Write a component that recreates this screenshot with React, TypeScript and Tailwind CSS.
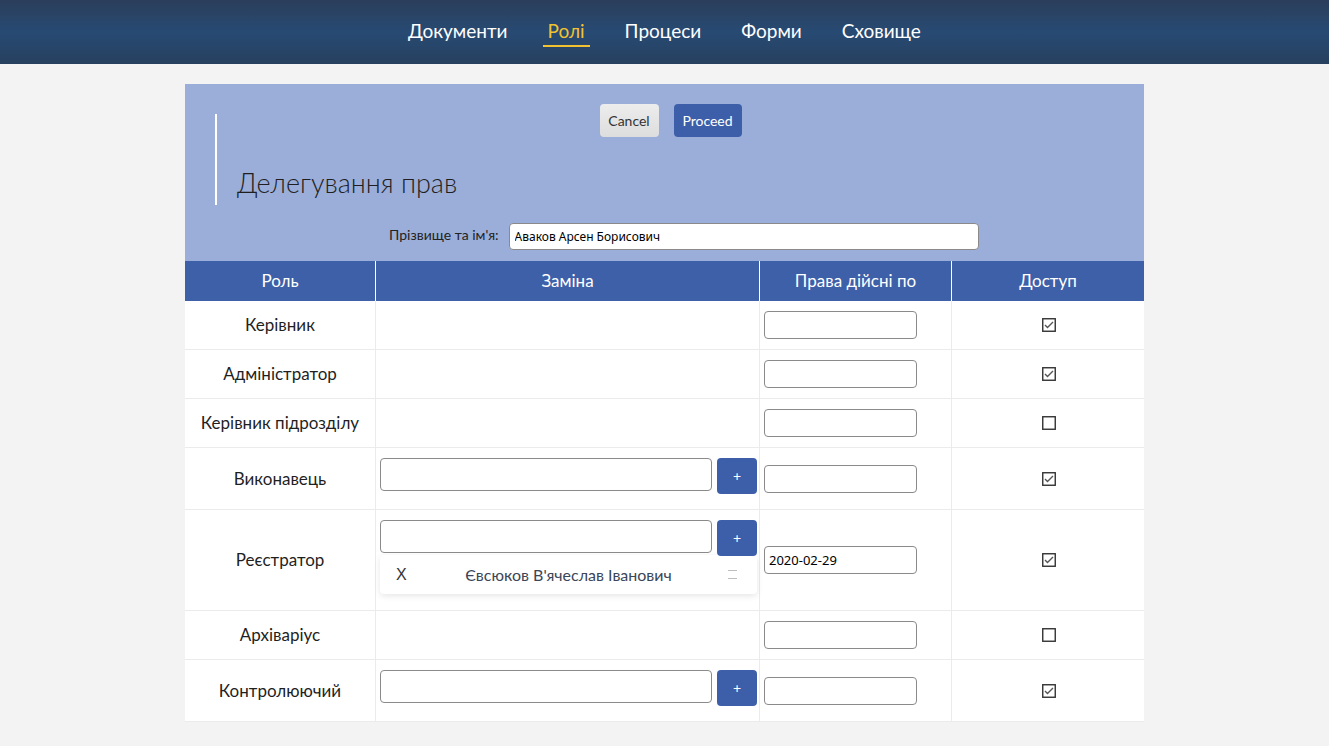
import React from "react";

const font = { fontFamily: "Lato, 'Open Sans', sans-serif" };

function Check({ checked }: { checked: boolean }) {
  return (
    <svg width="14" height="14" viewBox="0 0 14 14">
      <rect x="0.75" y="0.75" width="12.5" height="12.5" fill="white" stroke="#333" strokeWidth="1.4" />
      {checked && (
        <polyline points="3,7 5.5,9.5 11,4" fill="none" stroke="#555" strokeWidth="1.4" />
      )}
    </svg>
  );
}

type Row = {
  role: string;
  h: string;
  sub: "none" | "input" | "dropdown";
  date: string;
  checked: boolean;
};

const rows: Row[] = [
  { role: "Керівник", h: "h-[49px]", sub: "none", date: "", checked: true },
  { role: "Адміністратор", h: "h-[49px]", sub: "none", date: "", checked: true },
  { role: "Керівник підрозділу", h: "h-[49px]", sub: "none", date: "", checked: false },
  { role: "Виконавець", h: "h-[62px]", sub: "input", date: "", checked: true },
  { role: "Реєстратор", h: "h-[101px]", sub: "dropdown", date: "2020-02-29", checked: true },
  { role: "Архіваріус", h: "h-[49px]", sub: "none", date: "", checked: false },
  { role: "Контролюючий", h: "h-[62px]", sub: "input", date: "", checked: true },
];

function SubInput() {
  return (
    <div className="flex items-start gap-[5px]">
      <input
        className="w-[332px] h-[33px] border border-[#8a8a8a] rounded-[4px] bg-white outline-none"
        readOnly
      />
      <button className="w-[40px] h-[36px] rounded-[4px] bg-[#3d5fa9] text-white text-[14px] leading-none flex items-center justify-center">
        +
      </button>
    </div>
  );
}

export default function App() {
  const navItems = ["Документи", "Ролі", "Процеси", "Форми", "Сховище"];
  return (
    <div className="min-h-[746px] bg-[#f3f3f3] text-[#222]" style={font}>
      <nav className="h-[64px] bg-gradient-to-b from-[#2b3e5b] via-[#274a73] to-[#27405f] flex items-start justify-center gap-[30px] pt-[19px]">
        {navItems.map((n) => (
          <div
            key={n}
            className={
              "px-[5px] leading-[24px] pb-[2px] text-[19px] border-b-2 " +
              (n === "Ролі"
                ? "text-[#f2c230] border-[#f2c230]"
                : "text-white border-transparent")
            }
          >
            {n}
          </div>
        ))}
      </nav>

      <div className="w-[959px] mt-[20px] ml-[185px]">
        <div className="bg-[#9aaed9] h-[177px] pt-[20px] flex flex-col">
          <div className="flex justify-center gap-[15px] pl-[12px]">
            <button className="h-[33px] w-[59px] rounded-[4px] bg-gradient-to-b from-[#ededed] to-[#dddddd] text-[#333] text-[14px]">
              Cancel
            </button>
            <button className="h-[33px] w-[68px] rounded-[4px] bg-[#3d5fa9] text-white text-[14px]">
              Proceed
            </button>
          </div>
          <div className="-mt-[23px] ml-[30px] h-[91px] border-l-2 border-white flex items-end pb-[6px] pl-[20px]">
            <h1 className="text-[27px] font-light text-[#1f1f1f] leading-[32px]">Делегування прав</h1>
          </div>
          <div className="mt-[18px] flex items-center pl-[204px] gap-[10px]">
            <span className="text-[14px] text-[#222] -mt-[4px]">Прізвище та ім'я:</span>
            <input
              readOnly
              value="Аваков Арсен Борисович"
              className="w-[470px] h-[27px] border border-[#8a8a8a] rounded-[4px] bg-white px-[5px] text-[12px] text-black outline-none"
              style={{ fontFamily: "'Noto Sans', sans-serif" }}
            />
          </div>
        </div>

        <div className="grid grid-cols-[191px_384px_192px_192px] h-[40px] bg-[#3d60a9] text-white text-[17px]">
          <div className="flex items-center justify-center border-r border-white">Роль</div>
          <div className="flex items-center justify-center border-r border-white">Заміна</div>
          <div className="flex items-center justify-center border-r border-white">Права дійсні по</div>
          <div className="flex items-center justify-center">Доступ</div>
        </div>

        {rows.map((r) => (
          <div
            key={r.role}
            className={"grid grid-cols-[191px_384px_192px_192px] bg-white border-b border-[#ebebeb] " + r.h}
          >
            <div className="flex items-center justify-center border-r border-[#ebebeb] text-[17px] text-[#1f1f1f]">
              {r.role}
            </div>
            <div className="border-r border-[#ebebeb] pt-[10px] pl-[4px]">
              {r.sub !== "none" && <SubInput />}
              {r.sub === "dropdown" && (
                <div className="w-[377px] h-[39px] -mt-[1px] bg-white rounded-[4px] shadow-[0_2px_6px_rgba(0,0,0,0.1)] flex items-center px-[16px]">
                  <span className="text-[16px] text-[#333] w-[20px]" style={{ fontFamily: "'Liberation Sans', sans-serif" }}>
                    X
                  </span>
                  <span className="flex-1 text-center text-[16px] text-[#3b4658]">
                    Євсюков В'ячеслав Іванович
                  </span>
                  <span className="w-[20px] flex flex-col items-end gap-[7px] pr-[4px]">
                    <span className="block w-[9px] h-px bg-[#bdbdbd]" />
                    <span className="block w-[9px] h-px bg-[#bdbdbd]" />
                  </span>
                </div>
              )}
            </div>
            <div className="flex items-center border-r border-[#ebebeb] pl-[4px]">
              <input
                readOnly
                value={r.date}
                className="w-[153px] h-[28px] border border-[#8a8a8a] rounded-[4px] bg-white px-[4px] text-[13px] text-black outline-none"
                style={{ fontFamily: "'Noto Sans', sans-serif" }}
              />
            </div>
            <div className="flex items-center justify-center pl-[1px]">
              <Check checked={r.checked} />
            </div>
          </div>
        ))}
      </div>
    </div>
  );
}
